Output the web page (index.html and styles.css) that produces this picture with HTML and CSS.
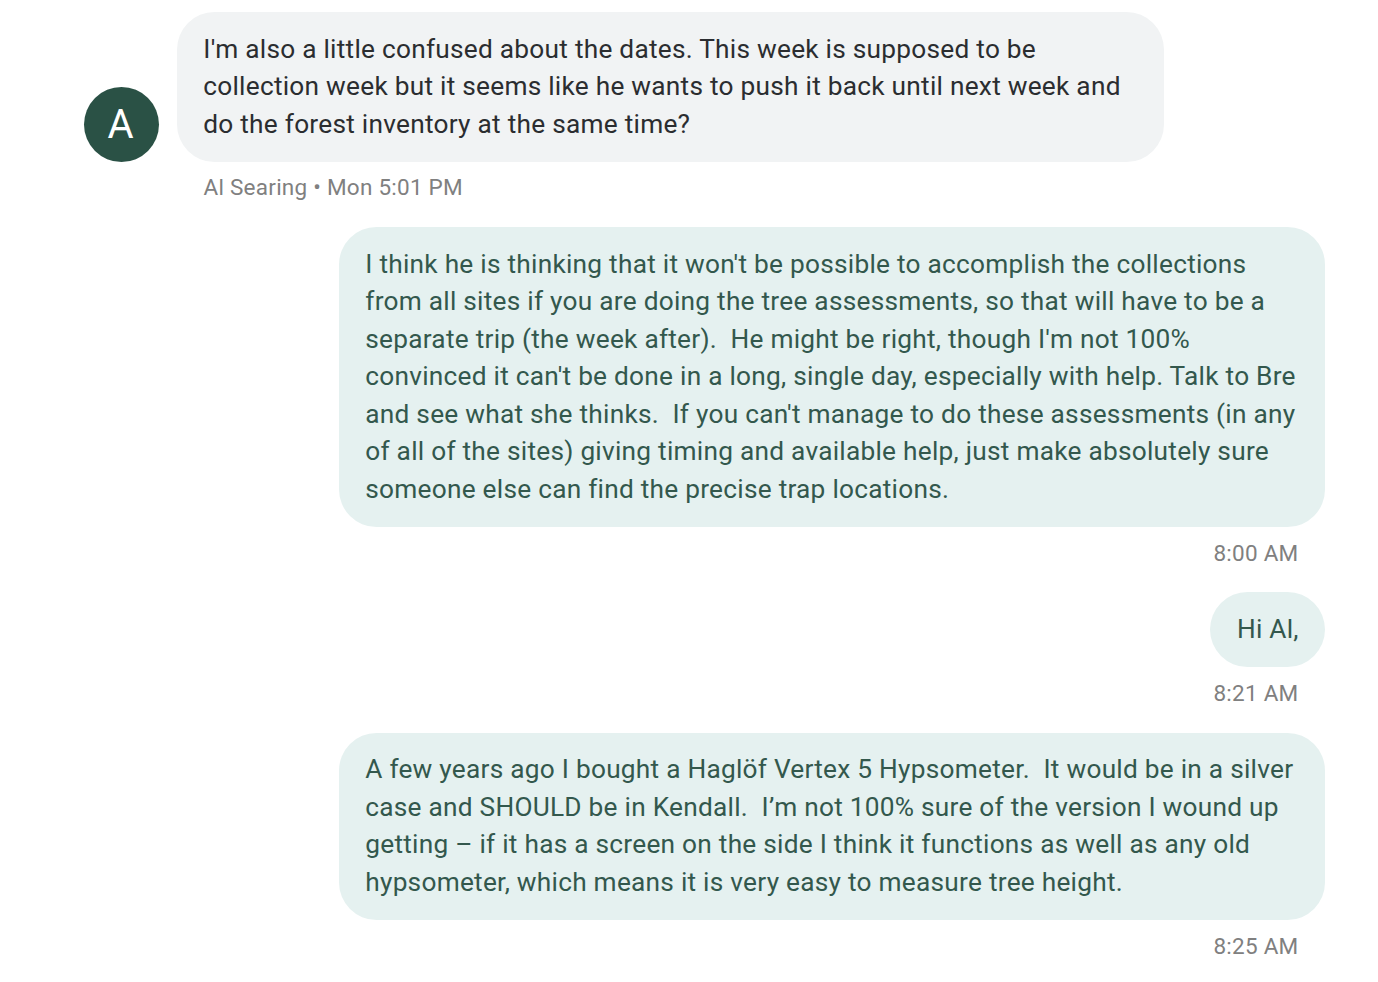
FILE: index.html
```html
<!DOCTYPE html>
<html lang="en">
  <head>
    <meta charset="UTF-8" />
    <title>Messages</title>
    <link rel="stylesheet" href="styles.css">
  </head>
  <body>
    <main class="thread">
      <div class="msg">
        <div class="msg-row">
          <div class="avatar">A</div>
          <div class="bubble bubble-in">I'm also a little confused about the dates. This week is supposed to be<br />collection week but it seems like he wants to push it back until next week and<br />do the forest inventory at the same time?</div>
        </div>
        <div class="meta meta-in">Al Searing • Mon 5:01 PM</div>
      </div>
      <div class="msg msg-out">
        <div class="bubble bubble-out bubble-wide">I think he is thinking that it won't be possible to accomplish the collections<br />from all sites if you are doing the tree assessments, so that will have to be a<br />separate trip (the week after).&nbsp; He might be right, though I'm not 100%<br />convinced it can't be done in a long, single day, especially with help. Talk to Bre<br />and see what she thinks.&nbsp; If you can't manage to do these assessments (in any<br />of all of the sites) giving timing and available help, just make absolutely sure<br />someone else can find the precise trap locations.</div>
        <div class="meta">8:00 AM</div>
      </div>
      <div class="msg msg-out">
        <div class="bubble bubble-out bubble-short">Hi Al,</div>
        <div class="meta">8:21 AM</div>
      </div>
      <div class="msg msg-out">
        <div class="bubble bubble-out bubble-wide">A few years ago I bought a Haglöf Vertex 5 Hypsometer.&nbsp; It would be in a silver<br />case and SHOULD be in Kendall.&nbsp; I’m not 100% sure of the version I wound up<br />getting – if it has a screen on the side I think it functions as well as any old<br />hypsometer, which means it is very easy to measure tree height.</div>
        <div class="meta">8:25 AM</div>
      </div>
    </main>
  </body>
</html>
```

FILE: styles.css
```css
* {
  box-sizing: border-box;
}

body {
  margin: 0;
  background-color: #fff;
  font-family: "Roboto", sans-serif;
  overflow: hidden;
}

.thread {
  display: flex;
  flex-direction: column;
  padding: 12px 53px 0 84px;
}

.msg {
  display: flex;
  flex-direction: column;
}

.msg-out {
  align-items: flex-end;
}

.msg-row {
  display: flex;
  align-items: flex-end;
  gap: 18px;
}

.avatar {
  width: 75px;
  height: 75px;
  border-radius: 50%;
  background-color: #2a5145;
  color: #fff;
  font-size: 40px;
  padding-right: 2px;
  display: flex;
  align-items: center;
  justify-content: center;
}

.bubble {
  font-size: 26.25px;
  letter-spacing: 0.25px;
  line-height: 37.5px;
  padding: 18.75px 26.25px;
  border-radius: 37.5px;
  white-space: nowrap;
}

.bubble-in {
  width: 987px;
  background-color: #f1f3f4;
  color: #2b2d30;
}

.bubble-out {
  background-color: #e5f1f0;
  color: #33584d;
}

.bubble-wide {
  width: 986px;
}

.bubble-short {
  padding-left: 27px;
}

.meta {
  height: 65.2px;
  font-size: 22.5px;
  letter-spacing: 0.25px;
  line-height: 26px;
  color: #808080;
  padding: 13px 26.5px 0;
}

.meta-in {
  margin-left: 93px;
  padding-top: 12px;
}
```
